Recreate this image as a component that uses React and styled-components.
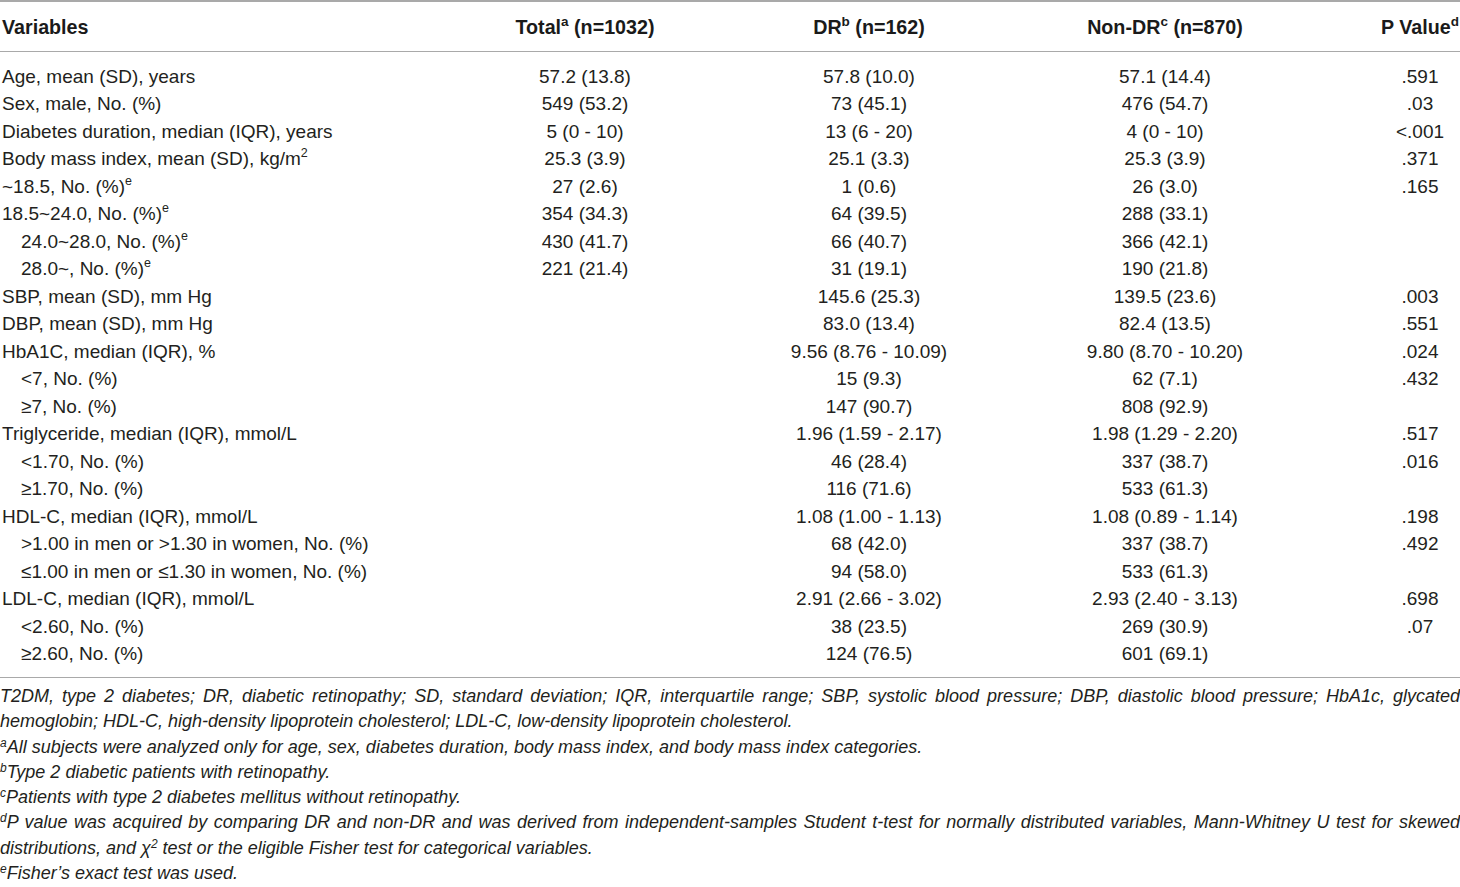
import styled, { createGlobalStyle } from "styled-components";

const GlobalStyle = createGlobalStyle`
  html, body {
    margin: 0;
    padding: 0;
    background: #ffffff;
  }
  body {
    font-family: "Liberation Sans", Arial, sans-serif;
    color: #231f20;
  }
`;

const rows = [
  { label: "Age, mean (SD), years", total: "57.2 (13.8)", dr: "57.8 (10.0)", non: "57.1 (14.4)", p: ".591" },
  { label: "Sex, male, No. (%)", total: "549 (53.2)", dr: "73 (45.1)", non: "476 (54.7)", p: ".03" },
  { label: "Diabetes duration, median (IQR), years", total: "5 (0 - 10)", dr: "13 (6 - 20)", non: "4 (0 - 10)", p: "<.001" },
  { label: "Body mass index, mean (SD), kg/m", sup: "2", total: "25.3 (3.9)", dr: "25.1 (3.3)", non: "25.3 (3.9)", p: ".371" },
  { label: "~18.5, No. (%)", sup: "e", total: "27 (2.6)", dr: "1 (0.6)", non: "26 (3.0)", p: ".165" },
  { label: "18.5~24.0, No. (%)", sup: "e", total: "354 (34.3)", dr: "64 (39.5)", non: "288 (33.1)" },
  { label: "24.0~28.0, No. (%)", sup: "e", indent: true, total: "430 (41.7)", dr: "66 (40.7)", non: "366 (42.1)" },
  { label: "28.0~, No. (%)", sup: "e", indent: true, total: "221 (21.4)", dr: "31 (19.1)", non: "190 (21.8)" },
  { label: "SBP, mean (SD), mm Hg", dr: "145.6 (25.3)", non: "139.5 (23.6)", p: ".003" },
  { label: "DBP, mean (SD), mm Hg", dr: "83.0 (13.4)", non: "82.4 (13.5)", p: ".551" },
  { label: "HbA1C, median (IQR), %", dr: "9.56 (8.76 - 10.09)", non: "9.80 (8.70 - 10.20)", p: ".024" },
  { label: "<7, No. (%)", indent: true, dr: "15 (9.3)", non: "62 (7.1)", p: ".432" },
  { label: "≥7, No. (%)", indent: true, dr: "147 (90.7)", non: "808 (92.9)" },
  { label: "Triglyceride, median (IQR), mmol/L", dr: "1.96 (1.59 - 2.17)", non: "1.98 (1.29 - 2.20)", p: ".517" },
  { label: "<1.70, No. (%)", indent: true, dr: "46 (28.4)", non: "337 (38.7)", p: ".016" },
  { label: "≥1.70, No. (%)", indent: true, dr: "116 (71.6)", non: "533 (61.3)" },
  { label: "HDL-C, median (IQR), mmol/L", dr: "1.08 (1.00 - 1.13)", non: "1.08 (0.89 - 1.14)", p: ".198" },
  { label: ">1.00 in men or >1.30 in women, No. (%)", indent: true, dr: "68 (42.0)", non: "337 (38.7)", p: ".492" },
  { label: "≤1.00 in men or ≤1.30 in women, No. (%)", indent: true, dr: "94 (58.0)", non: "533 (61.3)" },
  { label: "LDL-C, median (IQR), mmol/L", dr: "2.91 (2.66 - 3.02)", non: "2.93 (2.40 - 3.13)", p: ".698" },
  { label: "<2.60, No. (%)", indent: true, dr: "38 (23.5)", non: "269 (30.9)", p: ".07" },
  { label: "≥2.60, No. (%)", indent: true, dr: "124 (76.5)", non: "601 (69.1)" },
];

function App() {
  return (
    <>
      <GlobalStyle />
      <Page>
        <TableBox>
          <HeadRow>
            <HeadCell $align="left">Variables</HeadCell>
            <HeadCell>
              Total<Sup>a</Sup> (n=1032)
            </HeadCell>
            <HeadCell>
              DR<Sup>b</Sup> (n=162)
            </HeadCell>
            <HeadCell>
              Non-DR<Sup>c</Sup> (n=870)
            </HeadCell>
            <HeadCell>
              P Value<Sup>d</Sup>
            </HeadCell>
          </HeadRow>
          <Body>
            {rows.map((r, i) => (
              <Row key={i}>
                <LabelCell $indent={r.indent}>
                  {r.label}
                  {r.sup && <Sup $light>{r.sup}</Sup>}
                </LabelCell>
                <Cell>{r.total}</Cell>
                <Cell>{r.dr}</Cell>
                <Cell>{r.non}</Cell>
                <Cell>{r.p}</Cell>
              </Row>
            ))}
          </Body>
        </TableBox>
        <Notes>
          <Note>
            T2DM, type 2 diabetes; DR, diabetic retinopathy; SD, standard deviation; IQR, interquartile range; SBP, systolic blood pressure; DBP, diastolic blood pressure; HbA1c, glycated{" "}
            <NoWrap>hemoglobin; HDL-C, high-density</NoWrap> lipoprotein cholesterol; LDL-C, low-density lipoprotein cholesterol.
          </Note>
          <Note>
            <NoteSup>a</NoteSup>All subjects were analyzed only for age, sex, diabetes duration, body mass index, and body mass index categories.
          </Note>
          <Note>
            <NoteSup>b</NoteSup>Type 2 diabetic patients with retinopathy.
          </Note>
          <Note>
            <NoteSup>c</NoteSup>Patients with type 2 diabetes mellitus without retinopathy.
          </Note>
          <Note>
            <NoteSup>d</NoteSup>P value was acquired by comparing DR and non-DR and was derived from independent-samples Student t-test for normally distributed variables, Mann-Whitney U test for skewed{" "}
            <NoWrap>distributions, and</NoWrap> χ<NoteSup>2</NoteSup> test or the eligible Fisher test for categorical variables.
          </Note>
          <Note>
            <NoteSup>e</NoteSup>Fisher’s exact test was used.
          </Note>
        </Notes>
      </Page>
    </>
  );
}

export default App;

const Page = styled.div`
  width: 1460px;
  font-size: 19px;
`;

const TableBox = styled.div`
  border-top: 2px solid #a9a9a9;
  border-bottom: 1px solid #a9a9a9;
`;

const columns = "382px 406px 162px 430px 80px";

const HeadRow = styled.div`
  display: grid;
  grid-template-columns: ${columns};
  align-items: center;
  height: 49px;
  border-bottom: 1px solid #a9a9a9;
  font-size: 19.7px;
`;

const HeadCell = styled.div`
  font-weight: 700;
  color: #1a1a1a;
  text-align: ${(p) => p.$align || "center"};
  padding-left: ${(p) => (p.$align === "left" ? "2px" : "0")};
  padding-top: 2px;
  white-space: nowrap;
`;

const Body = styled.div`
  padding: 11px 0 9px;
`;

const Row = styled.div`
  display: grid;
  grid-template-columns: ${columns};
  align-items: center;
  height: 27.5px;
`;

const LabelCell = styled.div`
  padding-left: ${(p) => (p.$indent ? "21px" : "2px")};
  white-space: nowrap;
`;

const Cell = styled.div`
  text-align: center;
  white-space: nowrap;
`;

const Sup = styled.sup`
  font-size: ${(p) => (p.$light ? "12.5px" : "13.5px")};
  font-weight: ${(p) => (p.$light ? 400 : 700)};
  line-height: 0;
  vertical-align: 8px;
`;

const Notes = styled.div`
  padding-top: 6px;
`;

const Note = styled.p`
  margin: 0;
  font-style: italic;
  font-size: 18px;
  line-height: 25.3px;
  text-align: justify;
  color: #231f20;
`;

const NoWrap = styled.span`
  white-space: nowrap;
`;

const NoteSup = styled.sup`
  font-size: 12px;
  line-height: 0;
  vertical-align: 6px;
`;
